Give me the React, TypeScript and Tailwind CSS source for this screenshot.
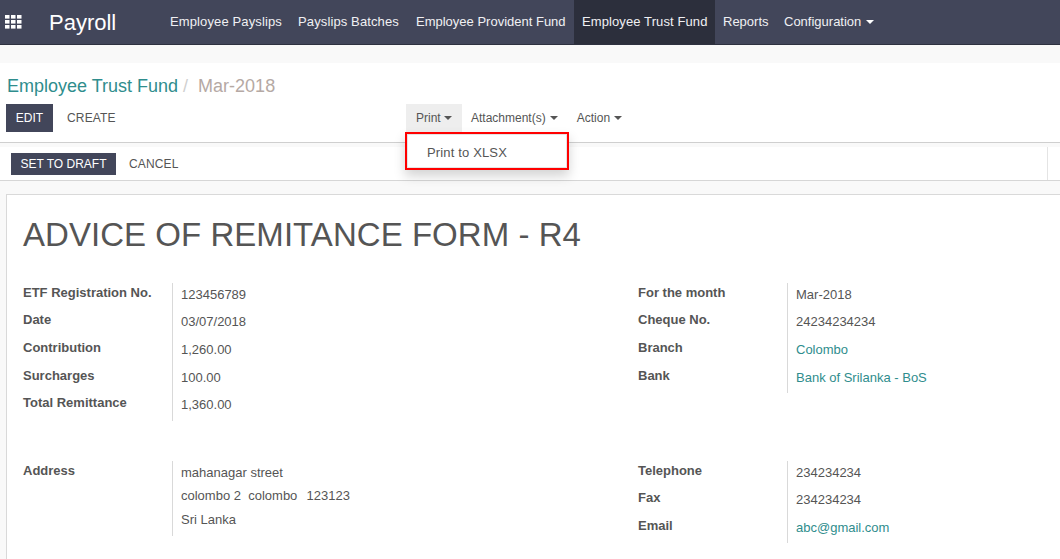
const Caret = ({ className = "" }: { className?: string }) => (
  <span className={`inline-block w-0 h-0 border-x-[4px] border-x-transparent border-t-[4px] ${className}`} />
);

const NavItem = ({ label, active, caret, w }: { label: string; active?: boolean; caret?: boolean; w: string }) => (
  <div className={`h-full flex items-center pl-2 text-[13px] text-[#f0f0f3] whitespace-nowrap ${w} ${active ? "bg-[#2c2f3c]" : ""}`}>
    {label}
    {caret && <Caret className="ml-[5px] border-t-white" />}
  </div>
);

const Field = ({ label, value, link, h }: { label: string; value: string; link?: boolean; h: string }) => (
  <div className={`flex ${h}`}>
    <div className="w-[149px] font-bold text-[#555555] text-[13px] pt-[1px] leading-[18px]">{label}</div>
    <div className={`flex-1 border-l border-[#d9d9d9] pl-2 pt-[3px] leading-[18px] text-[13px] ${link ? "text-[#2f8d8d]" : "text-[#555555]"}`}>
      {value}
    </div>
  </div>
);

export default function App() {
  return (
    <div className="w-[1060px] h-[559px] overflow-hidden bg-[#f9f9f9] font-['Liberation_Sans',Arial,sans-serif] text-[#555555] [text-rendering:optimizeSpeed]">
      <nav className="h-[45px] bg-[#42465a] border-b border-[#2e3140] flex items-center">
        <svg className="ml-[5px] w-[17px] h-[14px] mb-[1px]" viewBox="0 0 17 14" fill="#fff">
          <rect x="0" y="0" width="4.5" height="3.6" />
          <rect x="6" y="0" width="4.5" height="3.6" />
          <rect x="12" y="0" width="4.5" height="3.6" />
          <rect x="0" y="5" width="4.5" height="3.6" />
          <rect x="6" y="5" width="4.5" height="3.6" />
          <rect x="12" y="5" width="4.5" height="3.6" />
          <rect x="0" y="10" width="4.5" height="3.6" />
          <rect x="6" y="10" width="4.5" height="3.6" />
          <rect x="12" y="10" width="4.5" height="3.6" />
        </svg>
        <div className="ml-[27px] w-[113px] text-[22px] text-white">Payroll</div>
        <div className="flex h-full">
          <NavItem w="w-[128px] tracking-[0.12px]" label="Employee Payslips" />
          <NavItem w="w-[118px] tracking-[0.12px]" label="Payslips Batches" />
          <NavItem w="w-[166px]" label="Employee Provident Fund" />
          <NavItem w="w-[141px] tracking-[0.1px]" label="Employee Trust Fund" active />
          <NavItem w="w-[61px]" label="Reports" />
          <NavItem w="w-[110px]" label="Configuration" caret />
        </div>
      </nav>

      <div className="h-[18px]" />

      <div className="h-[80px] bg-white border-b border-[#cfcfcf] pl-[6px] relative">
        <div className="pt-[10px] h-[41px] text-[18px] leading-[26px] pl-[1px]">
          <span className="text-[#2f8d8d]">Employee Trust Fund</span>
          <span className="text-[#d0d0d0] ml-[5px]">/</span>
          <span className="text-[#b5a9a4] ml-[10px]">Mar-2018</span>
        </div>
        <div className="flex items-start h-[28px]">
          <div className="w-[47px] h-[28px] bg-[#42465a] text-white text-[12px] flex items-center justify-center">EDIT</div>
          <div className="ml-[14px] h-[28px] text-[12px] tracking-[0.15px] flex items-center w-[49px]">CREATE</div>
          <div className="ml-[290px] w-[56px] h-[28px] bg-[#eeeeee] text-[12px] flex items-center pl-[10px]">
            Print<Caret className="ml-[3px] border-t-[#555555]" />
          </div>
          <div className="ml-[9px] h-[28px] text-[12px] flex items-center">
            Attachment(s)<Caret className="ml-[4px] border-t-[#555555]" />
          </div>
          <div className="ml-[19px] h-[28px] text-[12px] flex items-center">
            Action<Caret className="ml-[4px] border-t-[#555555]" />
          </div>
        </div>
        <div className="absolute left-[405px] top-[69px] w-[164px] h-[38px] bg-white border-2 border-[#ff0000] shadow-[0_6px_12px_rgba(0,0,0,0.175),inset_0_0_0_1px_#e4e4e4] flex items-center pl-[20px] pt-[4px] text-[13px] tracking-[0.15px] z-10">
          Print to XLSX
        </div>
      </div>

      <div className="mt-[4px] h-[34px] bg-white border-b border-[#d6d6d6] flex items-start pl-[11px] pt-[6px] relative">
        <div className="w-[105px] h-[22px] bg-[#42465a] text-white text-[12px] flex items-center justify-center">SET TO DRAFT</div>
        <div className="ml-[13px] h-[22px] text-[12px] tracking-[0.15px] flex items-center">CANCEL</div>
        <div className="absolute right-[12px] top-0 h-[33px] border-l border-[#e4e4e4]" />
      </div>

      <div className="mt-[13px] ml-[6px] h-[400px] bg-white border-l border-t border-[#d9d9d9] pl-[16px]">
        <h1 className="pt-[20px] h-[88px] text-[33px] leading-[39px] tracking-[0.04px] text-[#555555]">ADVICE OF REMITANCE FORM - R4</h1>

        <div className="flex">
          <div className="w-[615px]">
            <Field h="h-[27px]" label="ETF Registration No." value="123456789" />
            <Field h="h-[28px]" label="Date" value="03/07/2018" />
            <Field h="h-[28px]" label="Contribution" value="1,260.00" />
            <Field h="h-[27px]" label="Surcharges" value="100.00" />
            <Field h="h-[28px]" label="Total Remittance" value="1,360.00" />
          </div>
          <div className="flex-1">
            <Field h="h-[27px]" label="For the month" value="Mar-2018" />
            <Field h="h-[28px]" label="Cheque No." value="24234234234" />
            <Field h="h-[28px]" label="Branch" value="Colombo" link />
            <Field h="h-[27px]" label="Bank" value="Bank of Srilanka - BoS" link />
          </div>
        </div>

        <div className="flex mt-[40px]">
          <div className="w-[615px] flex h-[75px]">
            <div className="w-[149px] font-bold text-[13px] pt-[1px] leading-[18px]">Address</div>
            <div className="flex-1 border-l border-[#d9d9d9] pl-2 text-[13px]">
              <div className="leading-[23px] h-[23px]">mahanagar street</div>
              <div className="whitespace-pre leading-[23px] h-[24px]">
                colombo 2  colombo  <span className="ml-[2px]">123123</span>
              </div>
              <div className="leading-[23px] h-[23px]">Sri Lanka</div>
            </div>
          </div>
          <div className="flex-1">
            <Field h="h-[27px]" label="Telephone" value="234234234" />
            <Field h="h-[28px]" label="Fax" value="234234234" />
            <Field h="h-[27px]" label="Email" value="abc@gmail.com" link />
          </div>
        </div>
      </div>
    </div>
  );
}
